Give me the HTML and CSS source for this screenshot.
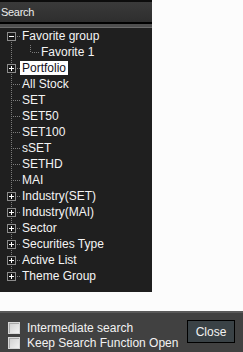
FILE: index.html
```html
<!DOCTYPE html>
<html>
<head>
<meta charset="utf-8">
<link rel="stylesheet" href="styles.css">
</head>
<body>
<div class="page">
  <div class="panel">
    <div class="header">Search</div>
    <div class="band"></div>
    <ul class="tree">
      <li class="row first"><span class="gut"><svg class="box" width="9" height="9" viewBox="0 0 9 9"><rect x="0.5" y="0.5" width="8" height="8" fill="#1a1a1a" stroke="#8c8c8c"/><path d="M2 4.5H7" stroke="#fff"/></svg><span class="conn short"></span></span><span class="label">Favorite group</span></li>
      <li class="row child"><span class="gut"><span class="cline"></span><span class="conn child-conn"></span></span><span class="label">Favorite 1</span></li>
      <li class="row"><span class="gut"><svg class="box" width="9" height="9" viewBox="0 0 9 9"><rect x="0.5" y="0.5" width="8" height="8" fill="#1a1a1a" stroke="#8c8c8c"/><path d="M2 4.5H7M4.5 2V7" stroke="#fff"/></svg><span class="conn short"></span></span><span class="label sel">Portfolio</span></li>
      <li class="row"><span class="gut"><span class="conn leaf"></span></span><span class="label">All Stock</span></li>
      <li class="row"><span class="gut"><span class="conn leaf"></span></span><span class="label">SET</span></li>
      <li class="row"><span class="gut"><span class="conn leaf"></span></span><span class="label">SET50</span></li>
      <li class="row"><span class="gut"><span class="conn leaf"></span></span><span class="label">SET100</span></li>
      <li class="row"><span class="gut"><span class="conn leaf"></span></span><span class="label">sSET</span></li>
      <li class="row"><span class="gut"><span class="conn leaf"></span></span><span class="label">SETHD</span></li>
      <li class="row"><span class="gut"><span class="conn leaf"></span></span><span class="label">MAI</span></li>
      <li class="row"><span class="gut"><svg class="box" width="9" height="9" viewBox="0 0 9 9"><rect x="0.5" y="0.5" width="8" height="8" fill="#1a1a1a" stroke="#8c8c8c"/><path d="M2 4.5H7M4.5 2V7" stroke="#fff"/></svg><span class="conn short"></span></span><span class="label">Industry(SET)</span></li>
      <li class="row"><span class="gut"><svg class="box" width="9" height="9" viewBox="0 0 9 9"><rect x="0.5" y="0.5" width="8" height="8" fill="#1a1a1a" stroke="#8c8c8c"/><path d="M2 4.5H7M4.5 2V7" stroke="#fff"/></svg><span class="conn short"></span></span><span class="label">Industry(MAI)</span></li>
      <li class="row"><span class="gut"><svg class="box" width="9" height="9" viewBox="0 0 9 9"><rect x="0.5" y="0.5" width="8" height="8" fill="#1a1a1a" stroke="#8c8c8c"/><path d="M2 4.5H7M4.5 2V7" stroke="#fff"/></svg><span class="conn short"></span></span><span class="label">Sector</span></li>
      <li class="row"><span class="gut"><svg class="box" width="9" height="9" viewBox="0 0 9 9"><rect x="0.5" y="0.5" width="8" height="8" fill="#1a1a1a" stroke="#8c8c8c"/><path d="M2 4.5H7M4.5 2V7" stroke="#fff"/></svg><span class="conn short"></span></span><span class="label">Securities Type</span></li>
      <li class="row"><span class="gut"><svg class="box" width="9" height="9" viewBox="0 0 9 9"><rect x="0.5" y="0.5" width="8" height="8" fill="#1a1a1a" stroke="#8c8c8c"/><path d="M2 4.5H7M4.5 2V7" stroke="#fff"/></svg><span class="conn short"></span></span><span class="label">Active List</span></li>
      <li class="row last"><span class="gut"><svg class="box" width="9" height="9" viewBox="0 0 9 9"><rect x="0.5" y="0.5" width="8" height="8" fill="#1a1a1a" stroke="#8c8c8c"/><path d="M2 4.5H7M4.5 2V7" stroke="#fff"/></svg><span class="conn short"></span></span><span class="label">Theme Group</span></li>
    </ul>
  </div>
  <div class="footer">
    <div class="checks">
      <label class="check"><span class="cb"></span><span>Intermediate search</span></label>
      <label class="check"><span class="cb"></span><span>Keep Search Function Open</span></label>
    </div>
    <button class="close">Close</button>
  </div>
</div>
</body>
</html>
```
FILE: styles.css
```css
html, body {
  margin: 0;
  padding: 0;
  background: #fcfcfc;
}
.page {
  width: 243px;
  height: 352px;
  display: flex;
  flex-direction: column;
  font-family: "Liberation Sans", Arial, sans-serif;
  font-size: 12px;
}
.panel {
  width: 152px;
  height: 292px;
  background: #1f1f1f;
  display: flex;
  flex-direction: column;
}
.header {
  height: 20px;
  border-top: 2px solid #0c0c0c;
  border-bottom: 2px solid #000;
  background: linear-gradient(to bottom, #3a3a3a, #2e2e2e);
  color: #ececec;
  font-size: 11px;
  letter-spacing: -0.3px;
  line-height: 21px;
  padding-left: 1px;
}
.band {
  height: 4px;
  background: linear-gradient(to bottom, #4e4e4e 0 3px, #6a6a6a 3px 4px);
}
.tree {
  list-style: none;
  margin: 0;
  padding: 0;
}
.row {
  height: 16px;
  display: flex;
  align-items: center;
  color: #f4f4f4;
}
.gut {
  width: 20px;
  height: 16px;
  flex: none;
  display: flex;
  align-items: center;
  background-image: repeating-linear-gradient(to bottom, #7c7c7c 0 1px, transparent 1px 2px);
  background-repeat: no-repeat;
  background-size: 1px 16px;
  background-position: 11px 0;
}
.first .gut {
  background-size: 1px 8px;
  background-position: 11px 8px;
}
.last .gut {
  background-size: 1px 8px;
  background-position: 11px 0;
}
.box {
  display: block;
  margin-left: 7px;
  flex: none;
}
.conn {
  height: 1px;
  flex: none;
  background-image: repeating-linear-gradient(to right, transparent 0 1px, #7c7c7c 1px 2px);
}
.conn.short {
  width: 4px;
}
.conn.leaf {
  width: 8px;
  margin-left: 12px;
}
.child .gut {
  width: 39px;
}
.cline {
  width: 1px;
  height: 8px;
  align-self: flex-start;
  margin-left: 30px;
  flex: none;
  background-image: repeating-linear-gradient(to bottom, transparent 0 1px, #7c7c7c 1px 2px);
}
.conn.child-conn {
  width: 8px;
}
.label {
  padding: 0 2px;
  line-height: 14px;
  height: 14px;
  white-space: nowrap;
}
.label.sel {
  background: #ffffff;
  color: #101020;
}
.footer {
  margin-top: 19px;
  height: 39px;
  border-top: 2px solid #5a5a5a;
  background: #414141;
  display: flex;
  justify-content: space-between;
  align-items: flex-start;
}
.checks {
  display: flex;
  flex-direction: column;
  padding-top: 7px;
  padding-left: 8px;
}
.check {
  height: 15px;
  display: flex;
  align-items: center;
  gap: 7px;
  color: #f2f2f2;
  white-space: nowrap;
}
.cb {
  width: 10px;
  height: 10px;
  border: 1px solid #d8d8d8;
  background: linear-gradient(135deg, #cfcfcf, #f2f2f2);
  box-shadow: inset 1px 1px 0 #a8a8a8;
  flex: none;
}
.close {
  margin-top: 7px;
  margin-right: 8px;
  width: 48px;
  height: 23px;
  border: 1px solid #000;
  background: #3a4246;
  color: #f2f2f2;
  font-family: "Liberation Sans", Arial, sans-serif;
  font-size: 12px;
  padding: 0;
}
```
